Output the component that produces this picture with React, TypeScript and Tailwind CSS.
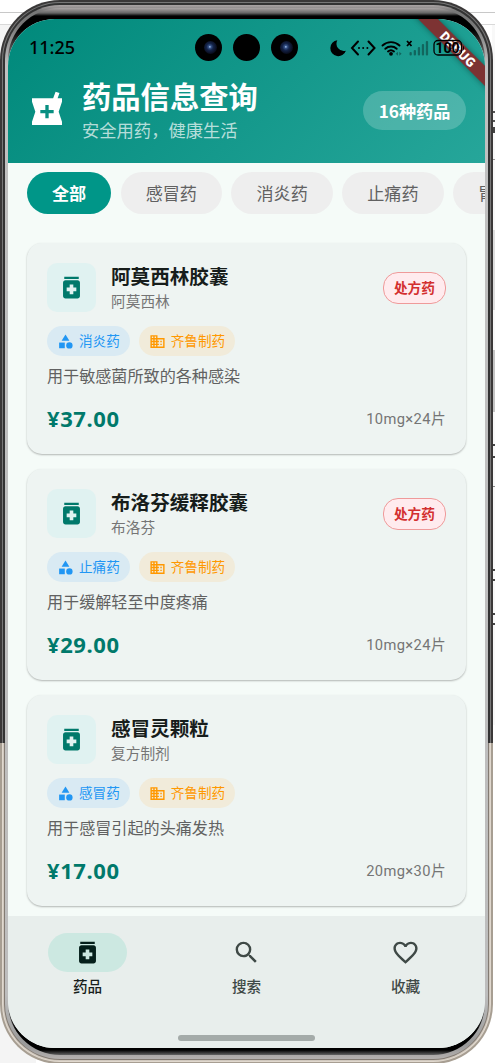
import type { ReactNode } from "react"
import {
	MdBusiness,
	MdCategory,
	MdFavoriteBorder,
	MdLocalPharmacy,
	MdMedication,
	MdSearch,
} from "react-icons/md"

const categories = ["全部", "感冒药", "消炎药", "止痛药", "胃肠药"]

const medicines = [
	{
		id: 1,
		name: "阿莫西林胶囊",
		generic: "阿莫西林",
		category: "消炎药",
		maker: "齐鲁制药",
		usage: "用于敏感菌所致的各种感染",
		price: "¥37.00",
		spec: "10mg×24片",
		prescription: true,
	},
	{
		id: 2,
		name: "布洛芬缓释胶囊",
		generic: "布洛芬",
		category: "止痛药",
		maker: "齐鲁制药",
		usage: "用于缓解轻至中度疼痛",
		price: "¥29.00",
		spec: "10mg×24片",
		prescription: true,
	},
	{
		id: 3,
		name: "感冒灵颗粒",
		generic: "复方制剂",
		category: "感冒药",
		maker: "齐鲁制药",
		usage: "用于感冒引起的头痛发热",
		price: "¥17.00",
		spec: "20mg×30片",
		prescription: false,
	},
]

const tabs = [
	{ name: "药品", icon: MdMedication, active: true },
	{ name: "搜索", icon: MdSearch, active: false },
	{ name: "收藏", icon: MdFavoriteBorder, active: false },
]

function Camera({ lens = false }: { lens?: boolean }) {
	return (
		<div className="flex h-[27px] w-[27px] items-center justify-center rounded-full bg-black">
			{lens && (
				<div className="ml-[3px] h-[13px] w-[13px] rounded-full bg-[radial-gradient(circle_at_45%_45%,#c4dcff_0,#3a5890_12%,#14244a_34%,#0a0e20_65%,#04050a)]" />
			)}
		</div>
	)
}

function StatusBar() {
	return (
		<div className="relative z-10 flex h-[27px] items-center justify-between pr-[20px] pl-[21px] text-black">
			<span className="-mt-[2px] font-['Noto_Sans','Noto_Sans_CJK_SC',sans-serif] text-[18px] leading-none font-medium">
				11:25
			</span>
			<div className="absolute inset-y-0 left-[187px] flex gap-[11px]">
				<Camera lens />
				<Camera />
				<Camera lens />
			</div>
			<svg className="h-[20px] w-[136px]" viewBox="0 0 136 20">
				{/* do not disturb */}
				<path d="M8.3 2.2a8 8 0 1 0 8.6 10.5A7.4 7.4 0 0 1 8.3 2.2Z" />
				{/* network adapter */}
				<path
					d="M29 3.500l-6 6.500 6 6.500M39.500 3.500l6 6.500-6 6.500"
					fill="none"
					stroke="black"
					strokeWidth="2"
					strokeLinecap="round"
				/>
				<circle cx="30" cy="10" r="1" />
				<circle cx="34.200" cy="10" r="1" />
				<circle cx="38.400" cy="10" r="1" />
				{/* wifi */}
				<g fill="none" stroke="black" strokeWidth="1.900" strokeLinecap="round">
					<path d="M53.500 7.500a12.500 12.500 0 0 1 17 0" />
					<path d="M56.300 10.800a8.400 8.400 0 0 1 11.400 0" />
					<path d="M59 13.500a4.600 4.600 0 0 1 6 0" />
				</g>
				<circle cx="62" cy="15.800" r="1.900" />
				<path
					d="M69 13.800l-2.300 2 2.300 2zM70.300 13.800l2.300 2-2.300 2z"
					opacity=".35"
				/>
				{/* signal */}
				<path
					d="M78 3l4.500 5M82.500 3l-4.500 5"
					stroke="black"
					strokeWidth="1.800"
				/>
				<g opacity=".35">
					<rect x="80.500" y="14" width="2.300" height="3.500" rx="1" />
					<rect x="84.700" y="12" width="2.300" height="5.500" rx="1" />
					<rect x="88.800" y="9" width="2.300" height="8.500" rx="1" />
					<rect x="92.800" y="6" width="2.300" height="11.500" rx="1" />
					<rect x="96.800" y="3" width="2.300" height="14.500" rx="1" />
				</g>
				{/* battery */}
				<rect
					x="105"
					y="2.500"
					width="27.500"
					height="14.500"
					rx="4"
					fill="none"
					stroke="black"
					strokeWidth="1.300"
				/>
				<path d="M134 7.500q2 2.500 0 5z" />
				<text
					x="118.500"
					y="14.800"
					textAnchor="middle"
					className="font-['Roboto',sans-serif] text-[14px] font-bold"
				>
					100
				</text>
			</svg>
		</div>
	)
}

function Header() {
	return (
		<header className="h-[144px] shrink-0 bg-[linear-gradient(135deg,#00897b,#26a69a)] pt-[15px]">
			<StatusBar />
			<div className="mt-[15px] flex items-center pr-[19px] pl-[19px] text-white">
				<MdLocalPharmacy className="mt-px h-[40px] w-[40px]" />
				<div className="ml-[15px] flex-1">
					<h1 className="text-[29.300px] leading-[38px] font-bold">药品信息查询</h1>
					<p className="mt-[3px] text-[17.300px] leading-[26px] text-white/70">
						安全用药，健康生活
					</p>
				</div>
				<span className="mt-[2px] flex h-[39px] items-center rounded-full bg-white/20 px-[15.500px] text-[17.200px] font-bold">
					16种药品
				</span>
			</div>
		</header>
	)
}

function Tag({ className, children }: { className: string; children: ReactNode }) {
	return (
		<span
			className={`flex h-[30px] items-center gap-[5px] rounded-full pr-[10px] pl-[10px] text-[13.600px] ${className}`}
		>
			{children}
		</span>
	)
}

function MedicineCard({ medicine }: { medicine: (typeof medicines)[number] }) {
	return (
		<article className="h-[211px] shrink-0 rounded-[15px] bg-[#eef4f2] px-[20px] pt-[20px] shadow-[0_1px_2px_rgba(0,0,0,0.28)]">
			<div className="flex h-[49px] items-center">
				<div className="flex h-[49px] w-[49px] items-center justify-center rounded-[10px] bg-[#e0f2f1] text-[#00796b]">
					<MdMedication className="h-[29px] w-[29px]" />
				</div>
				<div className="ml-[15px] flex-1">
					<h2 className="text-[19.600px] leading-[26px] font-bold text-[#171d1b]">
						{medicine.name}
					</h2>
					<p className="text-[14.700px] leading-[23px] text-[#757575]">
						{medicine.generic}
					</p>
				</div>
				{medicine.prescription && (
					<span className="flex h-[32px] items-center rounded-[15px] border border-[#ef9a9a] bg-[#ffebee] px-[10px] pb-px text-[13.700px] font-bold text-[#d32f2f]">
						处方药
					</span>
				)}
			</div>
			<div className="mt-[14px] flex gap-[9px]">
				<Tag className="bg-[#d9eaf3] text-[#2196f3]">
					<MdCategory className="h-[17px] w-[17px]" />
					<span className="-mt-[2px]">{medicine.category}</span>
				</Tag>
				<Tag className="bg-[#f1ebda] text-[#ff9800]">
					<MdBusiness className="h-[17px] w-[17px]" />
					<span className="-mt-[2px]">{medicine.maker}</span>
				</Tag>
			</div>
			<p className="mt-[7px] text-[16.100px] leading-[24px] text-[#616161]">
				{medicine.usage}
			</p>
			<div className="mt-[15px] flex items-center justify-between">
				<span className="font-['Noto_Sans','Noto_Sans_CJK_SC',sans-serif] text-[22px] leading-[32px] font-bold tracking-[0.600px] text-[#00796b]">
					{medicine.price}
				</span>
				<span className="mt-px font-['Roboto','Noto_Sans_CJK_SC',sans-serif] text-[14.700px] leading-[22px] tracking-[0.400px] text-[#757575]">
					{medicine.spec}
				</span>
			</div>
		</article>
	)
}

function BottomNav() {
	return (
		<nav className="relative flex h-[132px] shrink-0 bg-[#e8eeec] pt-[17px]">
			{tabs.map((tab) => (
				<div
					key={tab.name}
					className={`flex flex-1 flex-col items-center ${
						tab.active ? "text-[#171d1b]" : "text-[#3f4946]"
					}`}
				>
					<div
						className={`flex h-[39px] w-[79px] items-center justify-center rounded-full ${
							tab.active ? "bg-[#cce8e1] text-[#05201b]" : ""
						}`}
					>
						<tab.icon className="h-[29px] w-[29px]" />
					</div>
					<span className="mt-[4px] text-[14.600px] leading-[20px] font-medium">
						{tab.name}
					</span>
				</div>
			))}
			<div className="absolute bottom-[7px] left-[170px] h-[6px] w-[137px] rounded-full bg-[#a4aba9]" />
		</nav>
	)
}

export default function App() {
	return (
		<div className="relative flex h-[1063px] w-[495px] flex-col overflow-hidden bg-white font-['Noto_Sans_CJK_SC',sans-serif]">
			<div className="h-[25px] shrink-0 border-b border-[#d9d9d9] pt-[12px]">
				<div className="h-px bg-[#c8c8c8]" />
			</div>
			<div className="flex flex-1 justify-between">
				<div className="w-[36px] bg-[#f4f4f4]" />
				{/* Edge of the editor window behind the phone */}
				<div className="flex w-[3px] flex-col bg-[#f8f8f8] pt-[86px]">
					<div className="h-[11px] border-y-2 border-[#555]" />
					<div className="mt-[5px] h-[6px] bg-[#444]" />
					<div className="mt-[26px] h-px bg-[#999]" />
					<div className="mt-[70px] h-[80px] bg-[#ddd]" />
					<div className="mt-[40px] h-[62px] bg-[#c4c4c4]" />
					<div className="mt-[32px] h-[14px] border-y-2 border-[#444]" />
					<div className="mt-[28px] h-px bg-[#888]" />
					<div className="mt-[82px] h-[12px] border-y-2 border-[#444]" />
					<div className="mt-[32px] h-[12px] border-y-2 border-[#444]" />
					<div className="mt-[100px] flex-1 bg-white" />
				</div>
			</div>
			{/* Phone body, the metal rim changes tone below the middle */}
			<div className="absolute top-0 left-0 h-[1064px] w-[493px] rounded-[60px] bg-[linear-gradient(#3a3838_743px,#a79e92_743px)] p-[2px]">
				<div className="h-full rounded-[58px] bg-[linear-gradient(#777_741px,#e0d8ce_741px)] p-px">
					<div className="h-full rounded-[57px] bg-[linear-gradient(#333_740px,#d0c8be_740px)] p-px">
						<div className="h-full rounded-[56px] bg-[linear-gradient(#333_739px,#837b73_739px)] p-px">
							<div className="h-full rounded-[55px] bg-[linear-gradient(#aaa4a4,#777_6px,#777_20px,#c0c0c0_60px,#bdbdbd_990px,#999_1040px,#b4b0ae)] px-[3px] pt-[3px] pb-[4px]">
								<div className="flex h-full flex-col rounded-[52px] bg-[linear-gradient(#aaa4a4,#666_5px,#000_8px,#000_22px,transparent_58px,transparent_990px,#000_1022px,#000_1042px,#777_1048px)] pt-[11px] pb-[7px]">
									<div className="relative flex min-h-0 flex-1 flex-col overflow-hidden rounded-[47px] bg-[#f5fbf8]">
										<Header />
										<div className="flex shrink-0 gap-[9.500px] overflow-hidden py-[9px] pl-[19px]">
											{categories.map((category, index) => (
												<span
													key={category}
													className={`flex h-[42px] shrink-0 items-center rounded-full px-[25px] text-[17.100px] ${
														index === 0
															? "bg-[#009688] font-bold text-white"
															: "bg-[#eeeeee] text-[#616161]"
													}`}
												>
													{category}
												</span>
											))}
										</div>
										<main className="flex min-h-0 flex-1 flex-col gap-[15px] overflow-hidden px-[19px] pt-[20px]">
											{medicines.map((medicine) => (
												<MedicineCard key={medicine.id} medicine={medicine} />
											))}
										</main>
										<BottomNav />
										<div className="absolute top-[23px] right-[-48px] flex h-[14px] w-[150px] rotate-45 items-center justify-center bg-[#7d3333] text-[12.500px] font-black text-white shadow-[0_0_6px_rgba(0,0,0,0.4)]">
											DEBUG
										</div>
									</div>
								</div>
							</div>
						</div>
					</div>
				</div>
			</div>
		</div>
	)
}
